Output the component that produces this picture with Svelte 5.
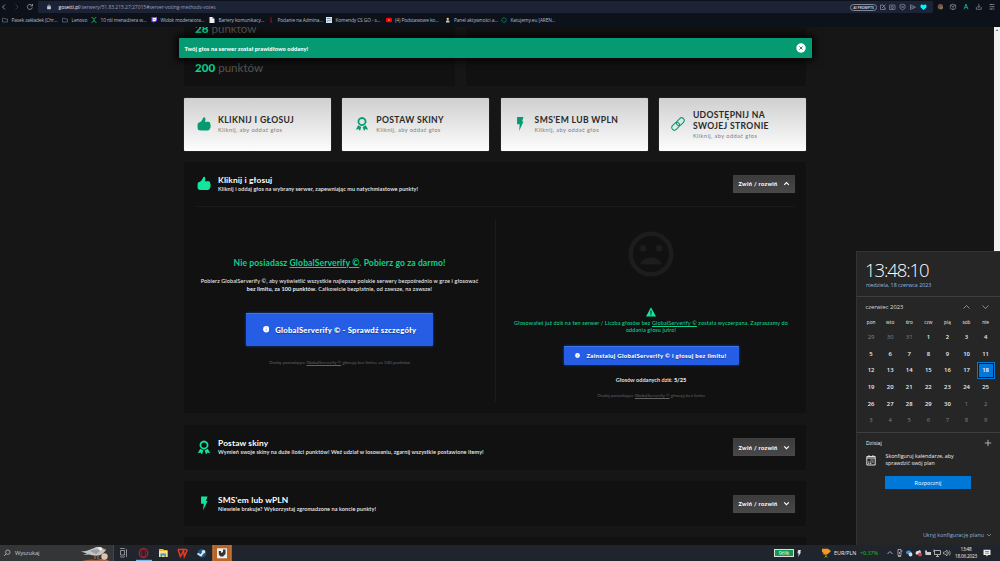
<script>
  const bookmarks = [
    { icon: 'folder', label: 'Pasek zakładek (Chr...' },
    { icon: 'folder', label: 'Lenovo' },
    { icon: 'cross', label: '10 ról menadżera w...' },
    { icon: 'twitch', label: 'Widok moderatora...' },
    { icon: 'doc', label: 'Bariery komunikacy...' },
    { icon: 'red', label: 'Podanie na Admina...' },
    { icon: 'image', label: 'Komendy CS GO - s...' },
    { icon: 'youtube', label: '(4) Podstawowe ko...' },
    { icon: 'panel', label: 'Panel aktywności a...' },
    { icon: 'ring', label: 'Katujemy.eu [AREN...' }
  ];

  const methods = [
    { icon: 'thumb', title: 'KLIKNIJ I GŁOSUJ' },
    { icon: 'award', title: 'POSTAW SKINY' },
    { icon: 'bolt', title: "SMS'EM LUB WPLN" },
    { icon: 'link', title: 'UDOSTĘPNIJ NA SWOJEJ STRONIE' }
  ];

  const weekdays = ['pon', 'wto', 'śro', 'czw', 'pią', 'sob', 'nie'];

  // three days of May, all of June, nine days of July
  const days = [
    ...[29, 30, 31].map((n) => ({ n, other: true })),
    ...Array.from({ length: 30 }, (_, i) => ({ n: i + 1, other: false })),
    ...Array.from({ length: 9 }, (_, i) => ({ n: i + 1, other: true }))
  ];

  let open = $state(true);
</script>

{#snippet icon(name)}
  {#if name === 'thumb'}
    <svg class="icon" viewBox="0 0 24 24"><path d="M1 13Q1 10 3.5 9.500 7 8.500 8.500 5.500L11 1Q12-.5 13.500 1 15.500 4 13.500 8H20Q23 8.200 22.600 11.500 24 13.500 23 15.600 24 18 22.200 19.500 21.500 23 18.500 23H8L3.500 22.500Q1 22 1 19Z" /></svg>
  {:else if name === 'award'}
    <svg class="icon" viewBox="0 0 24 24"><path d="M12 0 15 1 18 3 19.5 6.5 19.5 10 17.5 13 14.5 15 12 15.6 9.5 15 6.5 13 4.5 10 4.5 6.5 6 3 9 1ZM12 3.3A4.6 4.6 0 1 0 12 12.5 4.6 4.6 0 1 0 12 3.3Z" fill-rule="evenodd" /><path d="M5.5 14 10.8 17 8.5 24 6 20.6 1.3 22ZM18.5 14 13.2 17 15.5 24 18 20.6 22.7 22Z" /></svg>
  {:else if name === 'bolt'}
    <svg class="icon" viewBox="0 0 24 24"><path d="M7 0H18L15.5 7.5H18L10.5 24 11.5 12.5H7Z" /></svg>
  {:else if name === 'link'}
    <svg class="icon" viewBox="0 0 24 24"><g fill="none" stroke="currentColor" stroke-width="1.8"><rect x="-7.5" y="-4.5" width="15" height="9" rx="4.5" transform="translate(8 16) rotate(-45)" /><rect x="-7.5" y="-4.5" width="15" height="9" rx="4.5" transform="translate(16 8) rotate(-45)" /></g></svg>
  {:else if name === 'folder'}
    <svg class="icon" viewBox="0 0 12 12"><path d="M1 2.5H5L6 4H11V10H1Z" fill="none" stroke="#9298a8" /></svg>
  {:else if name === 'cross'}
    <svg class="icon" viewBox="0 0 12 12"><path d="M1 1Q5 1 6 5 7 2 11 0M1 11Q5 10 6 6 7 11 11 11" fill="none" stroke="#15a34a" stroke-width="2" /></svg>
  {:else if name === 'twitch'}
    <svg class="icon" viewBox="0 0 12 12"><path d="M1 0H12V7L9 10H6L4 12V10H1Z" fill="#8d45f6" /><path d="M3.5 2H10.5V6L8.5 8H3.5Z" fill="#fff" /><path d="M6 3.5V6M8 3.5V6" stroke="#8d45f6" /></svg>
  {:else if name === 'doc'}
    <svg class="icon" viewBox="0 0 12 12"><path d="M1 0H7L11 4V12H1Z" fill="#eee" /><path d="M7 0V4H11" fill="#8b8b8b" /></svg>
  {:else if name === 'red'}
    <svg class="icon" viewBox="0 0 12 12"><path d="M4 1H8L7 5 9 11H4L5 6Z" fill="#7a1020" /></svg>
  {:else if name === 'image'}
    <svg class="icon" viewBox="0 0 12 12"><rect width="12" height="12" fill="#dce3ea" /><path d="M2 3H9M1 10 5 6 7 8 11 5" fill="none" stroke="#527ba8" stroke-width="1.5" /></svg>
  {:else if name === 'youtube'}
    <svg class="icon" viewBox="0 0 12 12"><rect y="1.7" width="12" height="8.8" rx="2" fill="#f00" /><path d="M5 4.5 8 6.2 5 8Z" fill="#fff" /></svg>
  {:else if name === 'panel'}
    <svg class="icon" viewBox="0 0 12 12"><circle cx="5.5" cy="4" r="2.3" fill="#e5cfa4" /><path d="M2 11V8Q5.5 5 9 8V11Z" fill="#d8c7a0" /></svg>
  {:else if name === 'ring'}
    <svg class="icon" viewBox="0 0 12 12"><circle cx="6" cy="6" r="4.5" fill="none" stroke="#0a8f68" stroke-width="2" stroke-dasharray="2.8 .7" /></svg>
  {:else if name === 'info'}
    <svg class="icon" viewBox="0 0 12 12"><circle cx="6" cy="6" r="5.8" fill="#fff" /><path d="M6 5V9M6 2.7V4" stroke="#6f93ec" stroke-width="1.2" /></svg>
  {:else if name === 'up'}
    <svg class="icon" viewBox="0 0 12 12"><path d="M2 8.5 6 4.5 10 8.5" fill="none" stroke="currentColor" stroke-width="1.9" /></svg>
  {:else if name === 'down'}
    <svg class="icon" viewBox="0 0 12 12"><path d="M2 4 6 8 10 4" fill="none" stroke="currentColor" stroke-width="1.9" /></svg>
  {/if}
{/snippet}

{#snippet toggle(expanded, action)}
  <button class="toggle" onclick={action}>
    <span>Zwiń / rozwiń</span>
    {@render icon(expanded ? 'up' : 'down')}
  </button>
{/snippet}

<div class="screen">
  <header class="browser">
    <div class="nav">
      <div class="nav-buttons">
        <svg viewBox="0 0 38 13">
          <g fill="none" stroke="#858b99" stroke-width="1">
            <path d="M5 4.5 2.5 7 5 9.5" />
            <path d="M15.5 4.5 18 7 15.5 9.5" stroke="#323745" />
            <path d="M31.8 5.3A2.5 2.5 0 1 0 32.3 7.5M32.5 4V6H30.5" />
          </g>
        </svg>
      </div>
      <div class="address">
        <svg class="lock" viewBox="0 0 8 8"><rect x="1.5" y="3" width="5" height="4" fill="#c3c7d2" /><path d="M2.7 3V1.5H5.3V3" fill="none" stroke="#c3c7d2" stroke-width=".8" /></svg>
        <span class="url"><b>gosetti.pl</b>/serwery/51.83.215.27:27015#server-voting-methods-votes</span>
        <span class="prompts">AI PROMPTS</span>
        <svg class="tools" viewBox="0 0 50 12">
          <g fill="none" stroke="#7f8698" stroke-width=".8">
            <path d="M2.500 4H5M2.500 4V8.500H7V6.500M4 7 7.500 3.500M5 4 7.500 8" />
            <rect x="11.500" y="4" width="5.500" height="4.500" rx=".5" /><circle cx="14.200" cy="6.300" r="1.200" />
            <path d="M22 4 24.600 3.300 27 4V7L24.600 9 22 7ZM23.600 5 25.600 7M25.600 5 23.600 7" />
            <path d="M32.500 3.800 37.500 6.200 32.500 8.500V3.800M32.500 6.200H35.500" />
          </g>
          <path d="M45.500 9 42.500 6.300V4.500L43.800 3.300 45.500 4.200 47.200 3.300 48.500 4.500V6.300Z" fill="#00f7ff" />
        </svg>
      </div>
      <svg class="extensions" viewBox="0 0 68 13">
        <circle cx="7.500" cy="6.700" r="2.700" fill="#596050" /><path d="M4.800 6.700A2.700 2.700 0 0 1 9 4.500L7.500 6.700Z" fill="#9c3f42" /><path d="M7.500 9.400A2.700 2.700 0 0 0 10.200 6.700H7.500Z" fill="#8e7940" />
        <g fill="none" stroke="#8d929f" stroke-width=".7">
          <path d="M20.300 4 23 5.200V8.500L20.300 9.800 17.600 8.500V5.200ZM17.600 5.200 20.300 6.500 23 5.200M20.300 6.500V9.800" />
          <path d="M46.500 3.800V7.500M45 6 46.500 7.500 48 6M44 7V9.300H49V7" />
          <path d="M57.300 4.500H62.500M57.300 6.700H62.500M57.300 9H62.500M59 3.800V5.200M61 6V7.400M59 8.300V9.700" />
        </g>
        <path d="M31.500 9.300 33.500 4 35.500 9.300M32.500 7.400H34.500" fill="none" stroke="#139d96" stroke-width="1" />
      </svg>
    </div>
    <nav class="bookmarks">
      {#each bookmarks as b}
        <a href="#top">{@render icon(b.icon)}<span>{b.label}</span></a>
      {/each}
    </nav>
  </header>

  <div class="page">
    <main>
      <div class="stats">
        <div class="stat-panel">
          <p><b>28</b> punktów</p>
          <p><b>200</b> punktów</p>
        </div>
        <div class="stat-panel"></div>
      </div>

      <div class="methods">
        {#each methods as m}
          <button class="method">
            {@render icon(m.icon)}
            <span class="method-text">
              <span class="method-title">{m.title}</span>
              <span class="method-hint">Kliknij, aby oddać głos</span>
            </span>
          </button>
        {/each}
      </div>

      <section class="panel">
        <div class="panel-head">
          {@render icon('thumb')}
          <div class="panel-text">
            <h2>Kliknij i głosuj</h2>
            <p>Kliknij i oddaj głos na wybrany serwer, zapewniając mu natychmiastowe punkty!</p>
          </div>
          {@render toggle(open, () => (open = !open))}
        </div>
        {#if open}
          <div class="vote">
            <div class="vote-left">
              <h3>Nie posiadasz <u>GlobalServerify ©</u>. Pobierz go za darmo!</h3>
              <p class="pitch">Pobierz GlobalServerify ©, aby wyświetlić wszystkie najlepsze polskie serwery bezpośrednio w grze i głosować<br /><b>bez limitu, za 100 punktów</b>. Całkowicie bezpłatnie, od zawsze, na zawsze!</p>
              <button class="blue large">{@render icon('info')}<span>GlobalServerify © - Sprawdź szczegóły</span></button>
              <p class="note">Osoby posiadające <u>GlobalServerify ©</u> głosują bez limitu, za 100 punktów</p>
            </div>
            <div class="vote-right">
              <svg class="sad" viewBox="0 0 46 46">
                <circle cx="23" cy="23" r="20.3" fill="none" stroke="#1d1d1d" stroke-width="4.6" />
                <g fill="#1d1d1d"><circle cx="15" cy="17.3" r="3.4" /><circle cx="31" cy="17.3" r="3.4" /><path d="M12 33.5Q15 26.5 23 26.5T34 33.5Z" /></g>
              </svg>
              <svg class="warn" viewBox="0 0 10 10"><path d="M5 .2 10 9.5H0Z" fill="#12e69c" /><path d="M5 3.5V6.7M5 7.4V8.4" stroke="#111" /></svg>
              <p class="used">Głosowałeś już dziś na ten serwer / Liczba głosów bez <u>GlobalServerify ©</u> została wyczerpana. Zapraszamy do<br />oddania głosu jutro!</p>
              <button class="blue">{@render icon('info')}<span>Zainstaluj GlobalServerify © i głosuj bez limitu!</span></button>
              <p class="count">Głosów oddanych dziś: <b>5/25</b></p>
              <p class="note">Osoby posiadające <u>GlobalServerify ©</u> głosują bez limitu</p>
            </div>
          </div>
        {/if}
      </section>

      <section class="panel">
        <div class="panel-head">
          {@render icon('award')}
          <div class="panel-text">
            <h2>Postaw skiny</h2>
            <p>Wymień swoje skiny na duże ilości punktów! Weź udział w losowaniu, zgarnij wszystkie postawione itemy!</p>
          </div>
          {@render toggle(false)}
        </div>
      </section>

      <section class="panel">
        <div class="panel-head">
          {@render icon('bolt')}
          <div class="panel-text">
            <h2>SMS'em lub wPLN</h2>
            <p>Niewiele brakuje? Wykorzystaj zgromadzone na koncie punkty!</p>
          </div>
          {@render toggle(false)}
        </div>
      </section>

      <section class="panel"><div class="panel-head"></div></section>
    </main>

    <div class="scrollbar"><svg viewBox="0 0 6 6"><path d="M1.500 4 3 2.300 4.500 4Z" fill="#777" /></svg></div>

    <div class="toast">
      <span>Twój głos na serwer został prawidłowo oddany!</span>
      <svg viewBox="0 0 10 10"><circle cx="5" cy="5" r="4.700" fill="#fff" /><path d="M3.400 3.400 6.600 6.600M6.600 3.400 3.400 6.600" stroke="#1a6e58" stroke-width=".9" /></svg>
    </div>

    <aside class="calendar">
      <div class="clock">
        <time>13:48:10</time>
        <span class="date">niedziela, 18 czerwca 2023</span>
      </div>
      <div class="month">
        <div class="month-head">
          <span>czerwiec 2023</span>
          <svg viewBox="0 0 26 8"><path d="M.5 5.500 3.500 2.500 6.500 5.500M19.500 2.500 22.500 5.500 25.500 2.500" fill="none" stroke="#aaa" stroke-width=".8" /></svg>
        </div>
        <div class="weekdays">
          {#each weekdays as d}<span>{d}</span>{/each}
        </div>
        <div class="days">
          {#each days as d}
            <span class:other={d.other} class:today={!d.other && d.n === 18}>{d.n}</span>
          {/each}
        </div>
      </div>
      <div class="agenda">
        <div class="agenda-head">
          <span>Dzisiaj</span>
          <svg viewBox="0 0 8 8"><path d="M4 .8V7.200M.8 4H7.200" stroke="#ccc" stroke-width=".8" /></svg>
        </div>
        <div class="agenda-body">
          <svg viewBox="0 0 10 12"><path d="M.8 2.500H9.200V11H.8ZM.8 4H9.200M3 1V3M7 1V3" fill="none" stroke="#ddd" /><path d="M4.500 6H8M2 8H8M2 9.700H6" stroke="#ccc" stroke-dasharray="1.300 .5" /></svg>
          <p>Skonfiguruj kalendarze, aby<br />sprawdzić swój plan</p>
        </div>
        <button class="start">Rozpocznij</button>
        <div class="hide">
          <span>Ukryj konfigurację planu</span>
          <svg viewBox="0 0 6 6"><path d="M1 2 3 4 5 2" fill="none" stroke="#7ea8cc" stroke-width=".7" /></svg>
        </div>
      </div>
    </aside>
  </div>

  <footer class="taskbar">
    <div class="search">
      <svg class="lens" viewBox="0 0 8 8"><circle cx="4.800" cy="3.200" r="2.200" fill="none" stroke="#bbb" stroke-width=".8" /><path d="M3.200 4.800 1 7" stroke="#bbb" stroke-width=".8" /></svg>
      <span>Wyszukaj</span>
      <svg class="gull" viewBox="0 0 32 15">
        <path d="M1 15Q9 12.500 15 14L22 12.500 29 15Z" fill="#9b6049" />
        <path d="M0 5.500Q7 5 12 2.500 18-.8 20 2.500L24 3.500 25 3.800Q22 9 17 9.500 12 10 8 8.500L2 9 6 7.500Z" fill="#c3c4c5" />
        <path d="M9 5Q15 2 20 4.500L15 8Z" fill="#9b9fa3" /><path d="M17 2Q20-.3 22 3L19 5Z" fill="#efefed" />
        <path d="M21.500 2.500 25 4" stroke="#d48228" stroke-width="1.300" /><path d="M14 9V13M17 9V13" stroke="#bd7447" /><circle cx="23.500" cy="10.500" r="3.200" fill="#dfc2aa" />
      </svg>
    </div>
    <svg class="apps" viewBox="0 0 120 16">
      <rect x="22" y="14.800" width="16" height="1.200" fill="#78b8e6" />
      <g fill="none" stroke="#a9abb0" stroke-width=".8"><path d="M6.500 5.500H10.500V10H6.500ZM6.500 4V3.500H10.500V4M6.500 11.500V12H10.500V11.500M12.500 4V12" /></g>
      <ellipse cx="29.500" cy="8" rx="4.200" ry="4.400" fill="none" stroke="#a51f38" stroke-width="1.500" /><ellipse cx="29.500" cy="8" rx="1.900" ry="3.500" fill="#20242b" stroke="#a51f38" stroke-width=".7" />
      <path d="M45 4H49L50 5H53.500V12H45Z" fill="#edb82e" /><path d="M45 6H53.500V12H45Z" fill="#ffe18a" /><path d="M46.500 8.500H52V12H50.500V10.500H48V12H46.500Z" fill="#3b94cf" />
      <path d="M64 4.500 66.500 11.500 69.500 5.500 70.300 11.500 73.500 4.500M64 4.500H72.500" fill="none" stroke="#ee3a1b" stroke-width="1.500" />
      <circle cx="88" cy="8.300" r="4.300" fill="#185486" /><circle cx="89.500" cy="6.800" r="1.800" fill="#dce4ea" /><path d="M83.500 8.500 87 10.500 89 7.500" fill="none" stroke="#dce4ea" stroke-width="2" />
      <rect x="98.500" width="19" height="16" fill="#b86427" /><rect x="98.500" width="1" height="16" fill="#cf7d40" /><rect x="116.500" width="1" height="16" fill="#cf7d40" /><rect x="103" y="3.300" width="10" height="10" fill="#eee" />
      <path d="M104.800 6H107V8L109 7V4.500H111.500V9L109 11.500H106.500L104.800 9.500Z" fill="#333" />
    </svg>
    <div class="battery"><span>96%</span></div>
    <svg class="plug" viewBox="0 0 6 8"><path d="M2 1H5L4.200 3.500H5L2 8 2.800 4.500H1.500Z" fill="#ddd" /></svg>
    <svg class="trophy" viewBox="0 0 10 10"><path d="M1 .8H7L10 3 8 5 6 6.500H3L1 5.500H3L1 3.800Z" fill="#f6991d" /><path d="M5 5V8" stroke="#db851c" /><path d="M3.500 9.500 5 8 6.500 9.500" fill="none" stroke="#6dab1f" /></svg>
    <span class="currency">EUR/PLN</span>
    <span class="change">+0,37%</span>
    <svg class="tray" viewBox="0 0 66 16">
      <path d="M1.500 9 4 6.500 6.500 9" fill="none" stroke="#ccc" stroke-width=".8" />
      <path d="M12 4.500H15V10.500H12V4.500M15 6H16.500M13.500 7V9M12 11.500H15" fill="none" stroke="#bbb" stroke-width=".8" />
      <path d="M20 8Q20 5.500 22 5.800 24 4.500 25 7 26.500 7.500 26 9H21Z" fill="#3c91d8" /><circle cx="24.500" cy="9.500" r="1.900" fill="#c8dff1" />
      <path d="M29.500 8Q30 5.500 32 6L34 5 35 7V9.500H30Z" fill="#ddd" /><circle cx="34" cy="9.500" r="2" fill="#d64545" />
      <path d="M39 5.500H41V7H45V10H39.500Z" fill="#ccc" />
      <path d="M48.500 5.500H54.500V9.500H48.500ZM51.500 9.500V11.500M50 11.500H53M48 4.500V7" fill="none" stroke="#ccc" stroke-width=".8" />
      <path d="M57.500 7H59L61 5V11L59 9H57.500ZM62 6.500Q63 8 62 9.500M63.500 5.500Q65 8 63.500 10.500" fill="none" stroke="#bbb" stroke-width=".7" />
    </svg>
    <div class="datetime"><span>13:48</span><span>18.06.2023</span></div>
    <svg class="message" viewBox="0 0 8 8"><path d="M.5.800H7.500V6H5L3.500 7.700V6H.5Z" fill="#eee" /><path d="M2 2.500H6M2 4.200H6" stroke="#24262b" stroke-width=".5" /></svg>
  </footer>
</div>

<style>
  :global(body) {
    margin: 0;
    background: #161616;
  }

  * {
    box-sizing: border-box;
  }

  p, h2, h3 {
    margin: 0;
  }

  button {
    border: none;
    padding: 0;
    font: inherit;
    color: inherit;
    cursor: pointer;
  }

  svg {
    display: block;
    flex: none;
  }

  .screen {
    width: 1000px;
    height: 561px;
    display: flex;
    flex-direction: column;
    overflow: hidden;
    font-family: 'Open Sans', sans-serif;
    white-space: nowrap;
  }

  /* browser chrome */
  .browser {
    height: 27px;
    background: #0d1119;
    flex: none;
  }

  .nav {
    display: flex;
    height: 13px;
  }

  .nav-buttons, .nav-buttons svg {
    width: 38px;
    height: 13px;
  }

  .address {
    width: 895px;
    margin-top: 1px;
    display: flex;
    align-items: center;
    background: #1d2337;
    border-radius: 1px;
    padding: 0 5px 0 8px;
  }

  .lock {
    width: 6px;
    height: 6px;
  }

  .url {
    margin-left: 6.5px;
    font-size: 5px;
    color: #9a9fb0;
    letter-spacing: -0.03px;
  }

  .url b {
    color: #f0f2f7;
    font-weight: 500;
  }

  .prompts {
    margin-left: auto;
    width: 27px;
    height: 7px;
    border: 1px solid #7f8698;
    border-radius: 4px;
    font-size: 3.4px;
    font-weight: 700;
    line-height: 5px;
    text-align: center;
    color: #c3c7d2;
  }

  .tools {
    width: 50px;
    height: 12px;
    margin-left: 1px;
  }

  .extensions {
    width: 67px;
    height: 13px;
  }

  .bookmarks {
    display: grid;
    grid-template-columns: 60px 29px 60px 58px 59px 58px 59.5px 59px 56.5px 60px;
    padding-left: 2px;
    height: 14px;
    align-items: center;
  }

  .bookmarks a {
    display: flex;
    align-items: center;
    gap: 3.5px;
    color: #b6bbc9;
    text-decoration: none;
    font-size: 4.8px;
    letter-spacing: -0.1px;
  }

  .bookmarks .icon {
    width: 6px;
    height: 6px;
  }

  /* page */
  .page {
    position: relative;
    height: 518px;
    flex: none;
    display: flex;
    background: #161616;
    overflow: hidden;
    font-family: Lato, sans-serif;
  }

  main {
    width: 622px;
    margin-left: 184px;
    margin-right: auto;
  }

  .stats {
    display: grid;
    grid-template-columns: 271px 340px;
    grid-template-rows: 59px;
    gap: 11px;
  }

  .stat-panel {
    display: flex;
    flex-direction: column;
    justify-content: flex-end;
    gap: 19.5px;
    min-height: 0;
    padding: 0 11px 8px;
    background: #111;
    border-radius: 0 0 2px 2px;
    font-size: 11.6px;
    line-height: 20px;
    color: #555;
  }

  .stat-panel b {
    color: #0ed18f;
    font-weight: 900;
  }

  .methods {
    display: grid;
    grid-template-columns: repeat(4, 147px);
    column-gap: 11.3px;
    margin: 11.5px 0 11px;
  }

  .method {
    display: flex;
    align-items: center;
    height: 53px;
    padding-left: 12.5px;
    background: linear-gradient(#cfcfcf, #fdfdfd);
    border-radius: 1px;
    box-shadow: 0 0 1px #999;
    text-align: left;
    color: #069a70;
  }

  .method .icon {
    width: 14px;
    height: 14px;
    margin-right: 7.5px;
  }

  .icon {
    fill: currentColor;
    flex: none;
  }

  .method-text {
    display: flex;
    flex-direction: column;
    white-space: normal;
    width: 90px;
  }

  .method-title {
    font-size: 8.6px;
    font-weight: 700;
    line-height: 11px;
    letter-spacing: 0.35px;
    color: #2a2a2a;
  }

  .method-hint {
    font-size: 5.7px;
    line-height: 7px;
    letter-spacing: 0.4px;
    color: #7d7d7d;
  }

  .panel {
    background: #111;
    border-radius: 2px;
    margin-bottom: 11.5px;
  }

  .panel-head {
    display: flex;
    align-items: center;
    height: 44.7px;
    padding: 0 11px 0 13px;
    color: #12e69c;
  }

  .panel-head > .icon {
    width: 14px;
    height: 15px;
    margin-right: 7px;
  }

  .panel-text {
    flex: 1;
    color: #eee;
  }

  .panel-text h2 {
    font-size: 8.4px;
    font-weight: 700;
    line-height: 10px;
    letter-spacing: 0.14px;
    color: #fff;
  }

  .panel-text p {
    font-size: 5.5px;
    line-height: 8px;
    font-weight: 600;
    letter-spacing: 0.085px;
  }

  .toggle {
    display: flex;
    align-items: center;
    justify-content: center;
    gap: 5px;
    width: 62px;
    height: 18px;
    background: linear-gradient(#3b3b3b, #484848);
    border-radius: 1px;
    box-shadow: inset 0 0 1px #666;
    font-size: 5.6px;
    font-weight: 900;
    letter-spacing: 0.35px;
    color: #fff;
  }

  .toggle .icon {
    width: 7px;
    height: 7px;
  }

  .vote {
    display: grid;
    grid-template-columns: 300px 299px;
    height: 207.3px;
    margin: 0 11px 0 12px;
    padding: 11.5px 0;
    border-top: 1px solid #1b1b1b;
    text-align: center;
  }

  .vote-left, .vote-right {
    display: flex;
    flex-direction: column;
    align-items: center;
  }

  .vote-left {
    padding: 38px 12px 0 0;
    border-right: 1px solid #1b1b1b;
  }

  .vote-right {
    padding-left: 11px;
  }

  h3 {
    font-size: 8.6px;
    font-weight: 700;
    line-height: 12px;
    letter-spacing: 0.1px;
    color: #0fcf8d;
  }

  .pitch {
    margin-top: 9.5px;
    font-size: 5.5px;
    line-height: 7.6px;
    font-weight: 500;
    letter-spacing: 0.105px;
    color: #eee;
  }

  .blue {
    display: flex;
    align-items: center;
    justify-content: center;
    gap: 6px;
    width: 175px;
    height: 19.5px;
    margin-top: 10.5px;
    background: #255ee5;
    border-radius: 1px;
    box-shadow: 0 0 3px #255ee5aa, inset 0 1px #4474ed;
    color: #fff;
    font-size: 6px;
    font-weight: 900;
    letter-spacing: 0.3px;
    text-shadow: 0 1px 1px #0006;
  }

  .blue .icon {
    width: 5px;
    height: 5px;
  }

  .blue.large {
    width: 187px;
    height: 32.5px;
    margin-top: 20px;
    font-size: 7.7px;
    letter-spacing: 0.23px;
  }

  .blue.large .icon {
    width: 6.5px;
    height: 6.5px;
  }

  .note {
    margin-top: 13px;
    font-size: 4.5px;
    line-height: 8px;
    letter-spacing: -0.02px;
    color: #626262;
  }

  .sad {
    width: 46px;
    height: 46px;
    margin-top: 12px;
  }

  .warn {
    width: 10px;
    height: 10px;
    margin-top: 30px;
  }

  .used {
    margin-top: 3px;
    font-size: 5.5px;
    line-height: 7.7px;
    font-weight: 500;
    letter-spacing: 0.105px;
    color: #0fcf8d;
  }

  .count {
    margin-top: 10.5px;
    font-size: 5.6px;
    line-height: 8px;
    font-weight: 600;
    color: #eee;
  }

  .count b {
    font-weight: 900;
  }

  .count + .note {
    margin-top: 8px;
  }

  .scrollbar {
    width: 6px;
    background: #f1f1f1;
  }

  .toast {
    position: absolute;
    left: 178.5px;
    top: 11px;
    width: 633.5px;
    height: 20px;
    display: flex;
    align-items: center;
    justify-content: space-between;
    padding: 0 6px;
    background: #049b72;
    border-radius: 1px;
    box-shadow: 0 0 9px 2px #000;
    color: #fff;
    font-size: 5.6px;
    font-weight: 900;
    letter-spacing: 0.11px;
  }

  .toast svg {
    width: 10px;
    height: 10px;
  }

  /* calendar flyout */
  .calendar {
    position: absolute;
    left: 856px;
    top: 224px;
    width: 144px;
    height: 294px;
    background: #262626;
    border-left: 1px solid #333;
    border-top: 1px solid #333;
    font-family: 'Open Sans', sans-serif;
    font-size: 5.3px;
    color: #eee;
  }

  .clock {
    display: flex;
    flex-direction: column;
    height: 44.5px;
    padding: 7px 0 0 8px;
    border-bottom: 1px solid #3f3f3f;
  }

  .clock time {
    font-size: 18.5px;
    font-weight: 300;
    line-height: 21px;
    letter-spacing: -1.1px;
    color: #fff;
  }

  .date {
    padding-left: 1px;
    line-height: 10px;
    color: #8bbce5;
  }

  .month {
    height: 136.5px;
    padding: 6px 4px 0 4.5px;
    border-bottom: 1px solid #3f3f3f;
  }

  .month-head {
    display: flex;
    justify-content: space-between;
    align-items: center;
    height: 9px;
    padding: 0 7px 0 4px;
    color: #ddd;
    font-size: 5.8px;
  }

  .month-head svg {
    width: 26px;
    height: 8px;
  }

  .weekdays, .days {
    display: grid;
    grid-template-columns: repeat(7, 19.1px);
    text-align: center;
  }

  .weekdays {
    height: 17.5px;
    line-height: 21px;
    font-size: 4.7px;
    font-weight: 500;
  }

  .days {
    grid-auto-rows: 16.7px;
    line-height: 16.7px;
    font-size: 5.9px;
    font-weight: 600;
  }

  .days .other {
    color: #848484;
    font-weight: 400;
  }

  .days .today {
    width: 14px;
    height: 13px;
    line-height: 13px;
    place-self: center;
    background: #0078d7;
    color: #fff;
    box-shadow: 0 0 0 1px #101820, 0 0 0 2px #0078d7;
  }

  .agenda {
    padding: 5px 8px 0 9px;
  }

  .agenda-head {
    display: flex;
    justify-content: space-between;
    align-items: center;
    height: 10px;
  }

  .agenda-head svg {
    width: 8px;
    height: 8px;
  }

  .agenda-body {
    display: flex;
    gap: 9.5px;
    margin-top: 5px;
    line-height: 7.3px;
  }

  .agenda-body svg {
    width: 10px;
    height: 12px;
    margin-top: 1px;
  }

  .start {
    display: block;
    width: 86px;
    height: 13px;
    margin: 8.5px 0 0 19px;
    background: #0078d7;
    color: #fff;
    font-size: 5.4px;
  }

  .hide {
    display: flex;
    justify-content: flex-end;
    align-items: center;
    gap: 2px;
    margin-top: 42px;
    color: #85b3da;
    font-size: 5.4px;
  }

  .hide svg {
    width: 6px;
    height: 6px;
  }

  /* taskbar */
  .taskbar {
    display: flex;
    align-items: center;
    height: 16px;
    flex: none;
    background: #20242c;
    color: #eee;
  }

  .search {
    display: flex;
    align-items: center;
    width: 114px;
    height: 16px;
    padding-left: 3px;
    background: #333537;
    border-right: 1px solid #454545;
    font-size: 5.7px;
    color: #ccc;
  }

  .lens {
    width: 8px;
    height: 8px;
    margin-right: 4px;
  }

  .gull {
    width: 32px;
    height: 15px;
    margin-left: auto;
  }

  .apps {
    width: 120px;
    height: 16px;
  }

  .battery {
    width: 20px;
    height: 8px;
    margin-left: 540px;
    border: 1px solid #ddd;
    background: #15984a;
    font-size: 5.4px;
    line-height: 6px;
    text-align: center;
    color: #fff;
  }

  .plug {
    width: 6px;
    height: 8px;
    margin-left: 2px;
  }

  .trophy {
    width: 10px;
    height: 10px;
    margin-left: 19px;
  }

  .currency {
    width: 26px;
    margin-left: 3px;
    font-size: 5.4px;
  }

  .change {
    width: 26px;
    font-size: 5.3px;
    font-weight: 600;
    color: #16a818;
  }

  .tray {
    width: 66px;
    height: 16px;
  }

  .datetime {
    width: 24px;
    display: flex;
    flex-direction: column;
    margin-left: 2px;
    font-size: 4.7px;
    line-height: 7px;
    text-align: center;
    letter-spacing: -0.18px;
  }

  .message {
    width: 8px;
    height: 8px;
    margin-left: 5px;
  }
</style>
